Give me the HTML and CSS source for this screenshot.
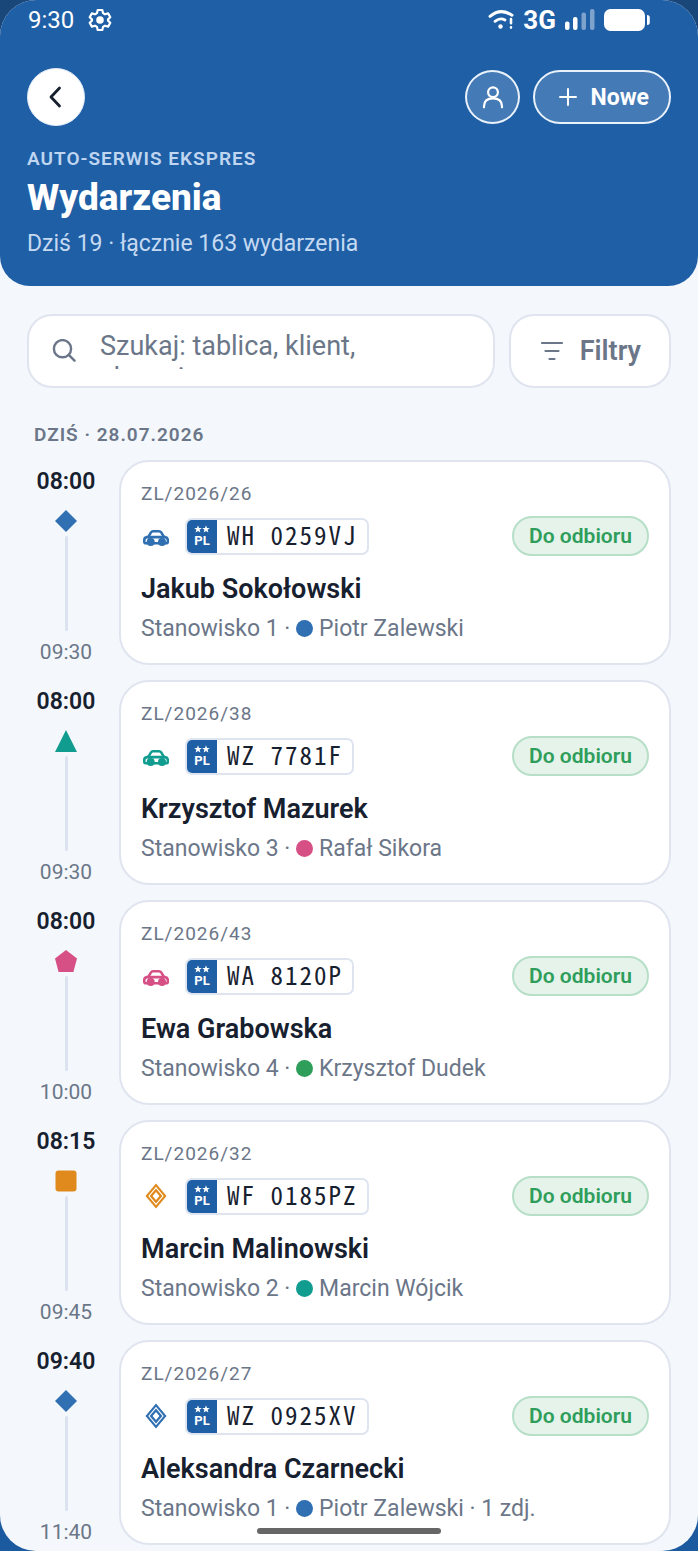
FILE: index.html
```html
<!DOCTYPE html>
<html lang="pl">
<head>
<meta charset="utf-8">
<meta name="viewport" content="width=device-width, initial-scale=1">
<title>Wydarzenia</title>
<link rel="stylesheet" href="styles.css">
</head>
<body>
<svg class="sprite" aria-hidden="true">
  <symbol id="car" viewBox="0 -3 26 20">
    <path d="M4.600 9 8 3.400Q8.700 2.200 10 2.200H16Q17.300 2.200 18.200 3.300L21.600 9" fill="none" stroke="currentColor" stroke-width="2.500" stroke-linejoin="round"/>
    <path d="M3.500 14.200H2.800Q1.300 14.200 1.300 12.700V10.800Q1.300 8.500 4 8.100H22Q24.800 8.600 24.800 11V12.700Q24.800 14.200 23.300 14.200H3.500" fill="none" stroke="currentColor" stroke-width="2.600"/>
    <circle cx="7.700" cy="13" r="4" fill="currentColor"/><circle cx="19" cy="13" r="4" fill="currentColor"/>
  </symbol>
  <symbol id="rhomb" viewBox="0 0 22 26">
    <path fill-rule="evenodd" fill="currentColor" d="M11 .4 21.500 13 11 25.600.5 13ZM11 3.800 3.300 13 11 22.200 18.700 13ZM11 5.400 17.400 13 11 20.600 4.600 13ZM11 8.900 7.600 13 11 17.100 14.400 13Z"/>
  </symbol>
  <symbol id="stars" viewBox="0 0 16 8">
    <path d="M4 .2 5 2.900 7.800 3 5.600 4.700 6.400 7.500 4 5.900 1.600 7.500 2.400 4.700.2 3 3 2.900Z" fill="#fff"/>
    <path d="M12 .2 13 2.900 15.800 3 13.600 4.700 14.400 7.500 12 5.900 9.600 7.500 10.400 4.700 8.200 3 11 2.900Z" fill="#fff"/>
  </symbol>
  <symbol id="m-diamond" viewBox="0 0 22 22"><path d="M11 0 22 11 11 22 0 11Z" fill="currentColor"/></symbol>
  <symbol id="m-triangle" viewBox="0 0 22 22"><path d="M11 0 22 22H0Z" fill="currentColor"/></symbol>
  <symbol id="m-pentagon" viewBox="0 0 22 22"><path d="M11 0 22 8.400 18.400 22H3.600L0 8.400Z" fill="currentColor"/></symbol>
  <symbol id="m-square" viewBox="0 0 22 22"><rect x=".5" y=".5" width="21" height="21" rx="3" fill="currentColor"/></symbol>
</svg>

<div class="screen">
  <header class="header">
    <div class="status">
      <span class="clock">9:30</span>
      <svg class="gear" viewBox="0 0 24 24" width="24" height="24" fill="none" stroke="#fff" stroke-width="2.200" stroke-linejoin="round"><path d="M9.700 2h4.600l.7 3.100 2 1.200 3.100-.9 2.200 3.900-2.300 2.100v1.200l2.300 2.100-2.200 3.900-3.100-.9-2 1.200-.7 3.100H9.700L9 18.900l-2-1.200-3.100.9-2.200-3.900L4 12.600v-1.200L1.700 9.300l2.200-3.900L7 6.300l2-1.200Z"/><circle cx="12" cy="12" r="3.800" fill="#fff" stroke="none"/></svg>
      <span class="status-right">
        <svg viewBox="0 0 26 22" width="26" height="22" fill="none" stroke="#fff" stroke-linecap="round"><path d="M2 7.400Q12.500-1.500 24 6.200" stroke-width="3"/><path d="M7 12.300Q12.200 8.200 17 11" stroke-width="2.800"/><circle cx="12.500" cy="17.500" r="2.200" fill="#fff" stroke="none"/><path d="M23 10V14.300M23 18.400v.2" stroke-width="2.600"/></svg>
        <b class="net">3G</b>
        <svg viewBox="0 0 30 22" width="30" height="22" fill="#fff"><rect y="12.500" width="4.500" height="8.500" rx="2"/><rect x="8" y="8" width="4.500" height="13" rx="2"/><g opacity=".42"><rect x="16.500" y="3.500" width="4.500" height="17.500" rx="2"/><rect x="25" width="4.500" height="21" rx="2"/></g></svg>
        <svg viewBox="0 0 46 22" width="46" height="22" fill="#fff"><rect width="41" height="22" rx="6.500"/><path d="M43 6q2.800 0 2.800 2.500v5q0 2.500-2.800 2.500Z"/></svg>
      </span>
    </div>
    <div class="bar">
      <button class="back" aria-label="Wstecz"><svg viewBox="0 0 16 22" width="16" height="22"><path d="M11.500 2 3 11l8.500 9" fill="none" stroke="#17202e" stroke-width="2.800" stroke-linecap="round" stroke-linejoin="round"/></svg></button>
      <div class="actions">
        <button class="user" aria-label="Profil"><svg viewBox="0 0 24 24" width="24" height="24" fill="none" stroke="#fff" stroke-width="2.200" stroke-linecap="round"><circle cx="12" cy="7.300" r="4.900"/><path d="M3 22.300v-1q0-8 9-8t9 8v1"/></svg></button>
        <button class="new"><svg viewBox="0 0 18 18" width="18" height="18"><path d="M9 1v16M1 9h16" stroke="#fff" stroke-width="2" stroke-linecap="round"/></svg>Nowe</button>
      </div>
    </div>
    <p class="eyebrow">AUTO-SERWIS EKSPRES</p>
    <h1>Wydarzenia</h1>
    <p class="summary">Dziś 19 · łącznie 163 wydarzenia</p>
  </header>

  <main>
    <div class="tools">
      <label class="search">
        <svg viewBox="0 0 24 24" width="24" height="24" fill="none" stroke="#6b7688" stroke-width="2.400" stroke-linecap="round"><circle cx="10.500" cy="9.700" r="8.600"/><path d="m17 16.200 5.500 5.500"/></svg>
        <textarea rows="1" aria-label="Szukaj" placeholder="Szukaj: tablica, klient, zlecenie"></textarea>
      </label>
      <button class="filter"><svg viewBox="0 0 24 20" width="24" height="20"><path d="M2 2h20M5.500 10h13M9.500 18h5" stroke="#6b7688" stroke-width="2.200" stroke-linecap="round"/></svg>Filtry</button>
    </div>
    <h2>DZIŚ · 28.07.2026</h2>

    <section class="list">
      <article class="event">
        <div class="time"><strong>08:00</strong><svg class="mark blue"><use href="#m-diamond"/></svg><i></i><span>09:30</span></div>
        <div class="card">
          <p class="order">ZL/2026/26</p>
          <div class="row"><svg class="vehicle blue"><use href="#car"/></svg><div class="plate"><span class="country"><svg><use href="#stars"/></svg>PL</span><span class="number">WH 0259VJ</span></div><span class="state">Do odbioru</span></div>
          <h3>Jakub Sokołowski</h3>
          <p class="meta">Stanowisko 1 · <i class="dot blue"></i>Piotr Zalewski</p>
        </div>
      </article>
      <article class="event">
        <div class="time"><strong>08:00</strong><svg class="mark teal"><use href="#m-triangle"/></svg><i></i><span>09:30</span></div>
        <div class="card">
          <p class="order">ZL/2026/38</p>
          <div class="row"><svg class="vehicle teal"><use href="#car"/></svg><div class="plate"><span class="country"><svg><use href="#stars"/></svg>PL</span><span class="number">WZ 7781F</span></div><span class="state">Do odbioru</span></div>
          <h3>Krzysztof Mazurek</h3>
          <p class="meta">Stanowisko 3 · <i class="dot pink"></i>Rafał Sikora</p>
        </div>
      </article>
      <article class="event">
        <div class="time"><strong>08:00</strong><svg class="mark pink"><use href="#m-pentagon"/></svg><i></i><span>10:00</span></div>
        <div class="card">
          <p class="order">ZL/2026/43</p>
          <div class="row"><svg class="vehicle pink"><use href="#car"/></svg><div class="plate"><span class="country"><svg><use href="#stars"/></svg>PL</span><span class="number">WA 8120P</span></div><span class="state">Do odbioru</span></div>
          <h3>Ewa Grabowska</h3>
          <p class="meta">Stanowisko 4 · <i class="dot green"></i>Krzysztof Dudek</p>
        </div>
      </article>
      <article class="event">
        <div class="time"><strong>08:15</strong><svg class="mark orange"><use href="#m-square"/></svg><i></i><span>09:45</span></div>
        <div class="card">
          <p class="order">ZL/2026/32</p>
          <div class="row"><svg class="vehicle orange"><use href="#rhomb"/></svg><div class="plate"><span class="country"><svg><use href="#stars"/></svg>PL</span><span class="number">WF 0185PZ</span></div><span class="state">Do odbioru</span></div>
          <h3>Marcin Malinowski</h3>
          <p class="meta">Stanowisko 2 · <i class="dot teal"></i>Marcin Wójcik</p>
        </div>
      </article>
      <article class="event">
        <div class="time"><strong>09:40</strong><svg class="mark blue"><use href="#m-diamond"/></svg><i></i><span>11:40</span></div>
        <div class="card">
          <p class="order">ZL/2026/27</p>
          <div class="row"><svg class="vehicle blue"><use href="#rhomb"/></svg><div class="plate"><span class="country"><svg><use href="#stars"/></svg>PL</span><span class="number">WZ 0925XV</span></div><span class="state">Do odbioru</span></div>
          <h3>Aleksandra Czarnecki</h3>
          <p class="meta">Stanowisko 1 · <i class="dot blue"></i>Piotr Zalewski · 1 zdj.</p>
        </div>
      </article>
    </section>
  </main>
</div>
<div class="home-indicator"></div>
</body>
</html>
```
FILE: styles.css
```css
* { box-sizing: border-box; }
body {
  margin: 0;
  background: linear-gradient(#1a4779, #1c5aa0);
  font-family: Roboto, "Noto Sans", sans-serif;
  color: #17202e;
}
p, h1, h2, h3 { margin: 0; }
button { font: inherit; margin: 0; padding: 0; cursor: pointer; }
svg { display: block; flex: none; }
.sprite { position: absolute; width: 0; height: 0; }

.screen {
  min-height: 100vh;
  background: #f4f8fc;
  border-radius: 36px;
  overflow: hidden;
}

.header {
  background: #1f5fa6;
  border-radius: 0 0 30px 30px;
  padding: 0 27px 28px;
  color: #fff;
}
.status { display: flex; align-items: center; height: 40px; gap: 14px; padding: 0 21px 0 1px; }
.clock { font-size: 24px; line-height: 28px; }
.status-right { display: flex; align-items: center; gap: 9px; margin-left: auto; }
.net { font-size: 26px; line-height: 30px; font-weight: 700; }

.bar { display: flex; justify-content: space-between; align-items: center; margin-top: 28px; }
.back, .user, .new { display: flex; align-items: center; justify-content: center; }
.back { width: 58px; height: 58px; border: 1px solid #dfe9f6; border-radius: 50%; background: #fff; }
.actions { display: flex; gap: 13px; }
.user, .new { height: 54px; border: 2px solid #e9f1fa; background: #447ab5; color: #fff; }
.user { width: 55px; border-radius: 50%; }
.new { padding: 0 20px 0 24px; gap: 13px; border-radius: 27px; font-size: 23px; font-weight: 700; }

.eyebrow { margin-top: 21px; font-size: 19px; line-height: 24px; font-weight: 600; letter-spacing: 1px; color: #bfd5f0; }
h1 { margin-top: 4px; font-size: 37px; line-height: 46px; font-weight: 800; }
.summary { margin-top: 9px; font-size: 23px; line-height: 28px; color: #c5d9f1; }

main { padding: 28px 27px 6px; }
.tools { display: flex; gap: 14px; }
.search, .filter { height: 74px; border: 2px solid #e0e4ef; border-radius: 25px; background: #fff; }
.search { flex: 1; min-width: 0; display: flex; align-items: center; gap: 24px; padding: 0 46px 0 23px; }
.search textarea {
  flex: 1;
  min-width: 0;
  height: 39px;
  margin: 0 0 4px;
  padding: 0;
  border: 0;
  outline: 0;
  resize: none;
  overflow: hidden;
  background: transparent;
  font: 27px/32px Roboto, "Noto Sans", sans-serif;
  color: #17202e;
}
.search textarea::placeholder { color: #6b7688; opacity: 1; }
.filter { display: flex; align-items: center; gap: 16px; padding: 0 28px 0 29px; color: #6b7688; font-size: 27px; font-weight: 600; }

h2 { margin: 35px 0 13px 7px; font-size: 19px; line-height: 24px; font-weight: 600; letter-spacing: 1px; color: #6b7688; }

.list { display: grid; gap: 15px; }
.event { display: flex; gap: 14px; }
.time { width: 78px; padding-top: 8px; display: flex; flex-direction: column; align-items: center; }
.time strong { font-size: 23px; line-height: 28px; font-weight: 600; }
.time span { font-size: 21px; line-height: 26px; color: #6b7688; }
.time i { flex: 1; width: 3px; margin: 4px 0 8px; border-radius: 2px; background: #dce2ee; }
.mark { width: 22px; height: 22px; margin-top: 14px; }

.card { flex: 1; min-width: 0; padding: 20px; border: 2px solid #e0e4ef; border-radius: 30px; background: #fff; }
.order { font-size: 19px; line-height: 24px; letter-spacing: 1px; color: #6b7688; }
.row { display: flex; align-items: center; height: 40px; margin-top: 10px; }
.vehicle { width: 30px; height: 26px; padding: 0 2px; }
.plate { display: flex; height: 37px; margin-left: 14px; border: 2px solid #dfe5f0; border-radius: 7px; background: #fff; }
.country { width: 30px; display: flex; flex-direction: column; align-items: center; justify-content: center; border-radius: 5px 0 0 5px; background: #1f5fa6; color: #fff; font-size: 13px; line-height: 15px; font-weight: 700; }
.country svg { width: 16px; height: 8px; }
.number { padding: 0 9px 0 10px; font-family: "Noto Sans Mono CJK JP", "Liberation Mono", monospace; font-size: 25px; line-height: 29px; font-weight: 500; letter-spacing: 2px; }
.state { margin-left: auto; padding: 0 15px; border: 2px solid #b7dfc8; border-radius: 20px; background: #e6f3eb; color: #2f9e5b; font-size: 21px; line-height: 36px; font-weight: 600; }
h3 { margin-top: 15px; font-size: 27px; line-height: 36px; font-weight: 600; }
.meta { display: flex; align-items: center; margin-top: 8px; font-size: 23px; line-height: 28px; color: #6b7688; white-space: pre; }
.dot { width: 17px; height: 17px; margin: 0 6px 1px 0; border-radius: 50%; background: currentColor; }

.blue { color: #2f6fb2; }
.teal { color: #119c90; }
.pink { color: #d65085; }
.green { color: #2f9e5b; }
.orange { color: #e08a1e; }

.home-indicator { position: fixed; left: 50%; bottom: 17px; width: 184px; height: 6px; margin-left: -92px; border-radius: 3px; background: #666; }
```
